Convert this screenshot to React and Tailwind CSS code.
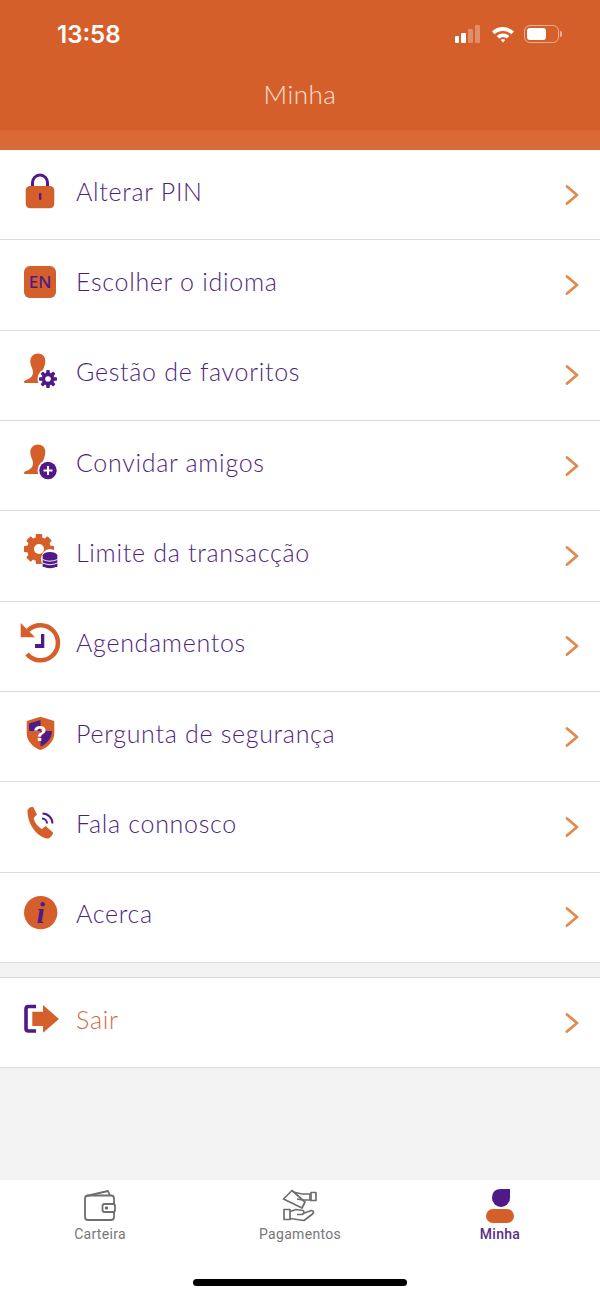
import React from "react";

const ORANGE = "#D55F2A";
const PURPLE = "#4F1A87";

const Person = () => (
  <path
    fill={ORANGE}
    d="M20 3.5C25 3.5 27.8 7.5 27.3 12C27 16 25 19 24.5 22C24 25 24 26 25 27L21 33L7 33C5.8 33 5.6 31 7 30.5C12.5 28.5 15 26 15 22C15 18.5 12.3 16 12.3 11C12.3 7 15.5 3.5 20 3.5Z"
  />
);

const gearTeeth = (cx, cy, r, w, h, fill) =>
  [0, 45, 90, 135, 180, 225, 270, 315].map((a) => (
    <rect
      key={a}
      x={cx - w / 2}
      y={cy - r - h / 2}
      width={w}
      height={h}
      rx="1"
      fill={fill}
      transform={`rotate(${a} ${cx} ${cy})`}
    />
  ));

const LockIcon = () => (
  <svg viewBox="0 0 44 44" className="w-11 h-11">
    <path d="M14.5 17V12.5a7.5 7.5 0 0 1 15 0V17" fill="none" stroke={PURPLE} strokeWidth="3" />
    <rect x="7.7" y="16" width="28.6" height="22.3" rx="4.5" fill={ORANGE} />
    <rect x="21" y="23" width="2.4" height="7" rx="1" fill={PURPLE} />
  </svg>
);

const LanguageIcon = () => (
  <div className="w-11 h-11 flex items-center justify-center">
    <span className="w-8 h-8 rounded-md bg-[#D55F2A] text-[#4F1A87] text-[17px] font-medium flex items-center justify-center font-['Noto_Sans',sans-serif]">
      EN
    </span>
  </div>
);

const FavoritesIcon = () => (
  <svg viewBox="0 0 44 44" className="w-11 h-11">
    <Person />
    <circle cx="30" cy="29" r="10.5" fill="#fff" />
    {gearTeeth(30, 29, 7, 3.6, 4, PURPLE)}
    <circle cx="30" cy="29" r="6.4" fill={PURPLE} />
    <circle cx="30" cy="29" r="2.8" fill="#fff" />
  </svg>
);

const InviteIcon = () => (
  <svg viewBox="0 0 44 44" className="w-11 h-11">
    <Person />
    <circle cx="30" cy="29.5" r="10.5" fill="#fff" />
    <circle cx="30" cy="29.5" r="8.7" fill={PURPLE} />
    <path d="M30 25v9M25.5 29.5h9" stroke="#fff" strokeWidth="2" />
  </svg>
);

const LimitIcon = () => (
  <svg viewBox="0 0 44 44" className="w-11 h-11">
    {gearTeeth(21, 18, 12.5, 6.5, 5, ORANGE)}
    <circle cx="21" cy="18" r="12" fill={ORANGE} />
    <circle cx="21" cy="18" r="5" fill="#fff" />
    <ellipse cx="32" cy="28" rx="9" ry="10" fill="#fff" />
    <rect x="24.7" y="24" width="14.6" height="12" fill={PURPLE} />
    <ellipse cx="32" cy="24.5" rx="7.3" ry="3.5" fill={PURPLE} />
    <ellipse cx="32" cy="34" rx="7.3" ry="3.2" fill={PURPLE} />
    <path d="M24.7 28.5q7.3 3.4 14.6 0M24.7 32q7.3 3.4 14.6 0" fill="none" stroke="#fff" strokeWidth="0.9" />
  </svg>
);

const ScheduleIcon = () => (
  <svg viewBox="0 0 44 44" className="w-11 h-11">
    <path d="M10 9.5A17.5 17.5 0 1 1 9 33" fill="none" stroke={ORANGE} strokeWidth="4.5" />
    <polygon points="2.7,2 2.7,16.3 17,16.3" fill={ORANGE} />
    <path d="M23 13h3.3v14H17v-4h6z" fill={PURPLE} />
  </svg>
);

const ShieldIcon = () => (
  <svg viewBox="0 0 44 44" className="w-11 h-11">
    <path d="M22.5 4.7L36.3 9V21C36.3 29 30 35.5 22.5 38C15 35.5 8.7 29 8.7 21V9Z" fill={ORANGE} />
    <path d="M22.5 8L11 11.4V19H22.5ZM22.5 19V34.5C28.5 32 33.8 27 33.9 19Z" fill={PURPLE} />
    <text x="22" y="29" textAnchor="middle" fontSize="22" fontWeight="700" fill="#fff" fontFamily="'Liberation Sans', sans-serif">
      ?
    </text>
  </svg>
);

const PhoneIcon = () => (
  <svg viewBox="0 0 44 44" className="w-11 h-11">
    <path
      d="M9.5 10C9 7.5 12 4.5 15 4.8L19 12.5L15.6 16C16.5 20.5 20 25 24 27L27.5 24L35 30.5C35 33.5 31.5 37 29 36.5C18 34 10 22 9.5 10Z"
      fill={ORANGE}
    />
    <path d="M24.5 11.5A10 10 0 0 1 34.5 21.5M24 16.5A5 5 0 0 1 29 21.5" fill="none" stroke={PURPLE} strokeWidth="2" />
  </svg>
);

const InfoIcon = () => (
  <svg viewBox="0 0 44 44" className="w-11 h-11">
    <circle cx="22.7" cy="20.6" r="16.7" fill={ORANGE} />
    <text x="22.7" y="31" textAnchor="middle" fontSize="30" fontWeight="700" fontStyle="italic" fill={PURPLE} fontFamily="'Liberation Serif', serif">
      i
    </text>
  </svg>
);

const LogoutIcon = () => (
  <svg viewBox="0 0 44 44" className="w-11 h-11">
    <path d="M18 8.5H10.5Q8 8.5 8 11V30.5Q8 33 10.5 33H18" fill="none" stroke={PURPLE} strokeWidth="3.6" />
    <path d="M14.3 13.7H25V7L41 21L25 34.7V28H14.3Z" fill={ORANGE} />
  </svg>
);

const Chevron = () => (
  <svg viewBox="0 0 16 22" className="w-4 h-[22px]">
    <path d="M3 2.5L13 11L3 19.5" fill="none" stroke="#E08A4E" strokeWidth="2.8" strokeLinecap="round" strokeLinejoin="round" />
  </svg>
);

const WalletIcon = () => (
  <svg viewBox="0 0 34 32" className="w-[34px] h-8" fill="none" stroke="#6E6E6E" strokeWidth="1.8" strokeLinejoin="round">
    <path d="M3.5 6L25 1L27 5.5" />
    <path d="M31 14V8.5Q31 5.5 28 5.5H5Q2 5.5 2 8.5V27Q2 30 5 30H28Q31 30 31 27V22" />
    <rect x="19.5" y="14" width="12.5" height="8" rx="2" />
    <circle cx="23.5" cy="18" r="0.9" fill="#6E6E6E" />
  </svg>
);

const PaymentsIcon = () => (
  <svg viewBox="0 0 36 34" className="w-9 h-[34px]" fill="none" stroke="#6E6E6E" strokeWidth="1.7" strokeLinejoin="round">
    <path d="M1.5 10L10 1.5L23 13L20 19Z" />
    <path d="M11 3L20 5H28V11H20.5L15 10" />
    <rect x="29" y="3.5" width="5" height="8" />
    <rect x="2" y="20.5" width="6" height="10" />
    <path d="M8 22.5L14 20.5L21 21.5Q23.5 24 20 25.5H15" />
    <path d="M21 24.5L29.5 21.5Q33 22 30.5 25L22 31.5L8 29.5" />
  </svg>
);

const MineIcon = () => (
  <div className="flex flex-col items-center gap-[2px]">
    <svg viewBox="0 0 20 18" className="w-5 h-[18px]">
      <path d="M20 0V9A9 9 0 0 1 2 9Q2 0 11 0Z" fill={PURPLE} />
    </svg>
    <span className="w-7 h-[14px] rounded-[7px] bg-[#D55F2A]"></span>
  </div>
);

const MenuRow = ({ icon, label, danger }) => (
  <div className="flex-1 flex items-center justify-between pr-[20px] bg-white border-b border-[#DCDCDC] min-h-0">
    <div className="flex items-center pb-[6px]">
      <div className="ml-[18px] mr-[14px]">{icon}</div>
      <span className={`text-[25px] leading-8 font-light tracking-[0.7px] mb-[2px] ${danger ? "text-[#D2694E]" : "text-[#4F1F80]"}`}>{label}</span>
    </div>
    <Chevron />
  </div>
);

const menuItems = [
  { label: "Alterar PIN", icon: <LockIcon /> },
  { label: "Escolher o idioma", icon: <LanguageIcon /> },
  { label: "Gestão de favoritos", icon: <FavoritesIcon /> },
  { label: "Convidar amigos", icon: <InviteIcon /> },
  { label: "Limite da transacção", icon: <LimitIcon /> },
  { label: "Agendamentos", icon: <ScheduleIcon /> },
  { label: "Pergunta de segurança", icon: <ShieldIcon /> },
  { label: "Fala connosco", icon: <PhoneIcon /> },
  { label: "Acerca", icon: <InfoIcon /> },
];

const TabItem = ({ icon, label, active }) => (
  <div className="w-[200px] h-[52px] flex flex-col items-center justify-between">
    <div className="h-[32px] flex items-center">{icon}</div>
    <span className={`text-[14px] leading-4 tracking-[0.3px] ${active ? "text-[#5B2E86] font-medium" : "text-[#777777]"}`}>{label}</span>
  </div>
);

export default function App() {
  return (
    <div className="w-[600px] h-[1298px] flex flex-col bg-[#F3F3F3] font-['Lato',sans-serif] overflow-hidden">
      {/* Header */}
      <header className="bg-[#D55F2A] h-[130px] shrink-0">
        <div className="h-[68px] flex items-center justify-between pl-[57px] pr-[38px]">
          <span className="text-white text-[24px] font-semibold font-['Inter',sans-serif] mt-[1px]">13:58</span>
          <div className="flex items-center">
            <div className="flex items-end gap-[2px] h-[18px]">
              <span className="w-[4px] h-[7px] rounded-[1px] bg-white"></span>
              <span className="w-[5px] h-[10px] rounded-[1px] bg-white"></span>
              <span className="w-[5px] h-[14px] rounded-[1px] bg-white/30"></span>
              <span className="w-[5px] h-[18px] rounded-[1px] bg-white/30"></span>
            </div>
            <svg viewBox="0 0 24 18" className="w-6 h-[18px] ml-[11px]">
              <path d="M1 6.5A16 16 0 0 1 23 6.5L20.3 9.3A12 12 0 0 0 3.7 9.3Z" fill="#fff" />
              <path d="M5.6 11A9.5 9.5 0 0 1 18.4 11L15.8 13.6A6 6 0 0 0 8.2 13.6Z" fill="#fff" />
              <path d="M9.8 15A3.5 3.5 0 0 1 14.2 15L12 17.5Z" fill="#fff" />
            </svg>
            <div className="ml-[9px] w-[35px] h-[18px] rounded-[6px] border border-white/50 p-[2px]">
              <div className="w-[19px] h-full rounded-[3px] bg-white"></div>
            </div>
            <span className="ml-[1px] w-[2px] h-[6px] rounded-r-sm bg-white/50"></span>
          </div>
        </div>
        <h1 className="text-center text-[26px] leading-[52px] font-light tracking-[0.5px] text-[#FBE3D5]">Minha</h1>
      </header>
      <div className="bg-[#D96A38] h-[20px] shrink-0"></div>

      {/* Menu */}
      <div className="h-[813px] shrink-0 flex flex-col">
        {menuItems.map((item) => (
          <MenuRow key={item.label} label={item.label} icon={item.icon} />
        ))}
      </div>

      <div className="h-[14px] shrink-0"></div>
      <div className="h-[91px] shrink-0 flex flex-col border-t border-[#DCDCDC]">
        <MenuRow label="Sair" icon={<LogoutIcon />} danger />
      </div>

      <div className="flex-1"></div>

      {/* Tab bar */}
      <nav className="h-[118px] shrink-0 bg-white flex flex-col items-center pt-[10px] font-['Roboto',sans-serif]">
        <div className="flex w-full">
          <TabItem icon={<WalletIcon />} label="Carteira" />
          <TabItem icon={<PaymentsIcon />} label="Pagamentos" />
          <TabItem icon={<MineIcon />} label="Minha" active />
        </div>
        <div className="mt-[37px] w-[214px] h-[7px] rounded-full bg-black"></div>
      </nav>
    </div>
  );
}
